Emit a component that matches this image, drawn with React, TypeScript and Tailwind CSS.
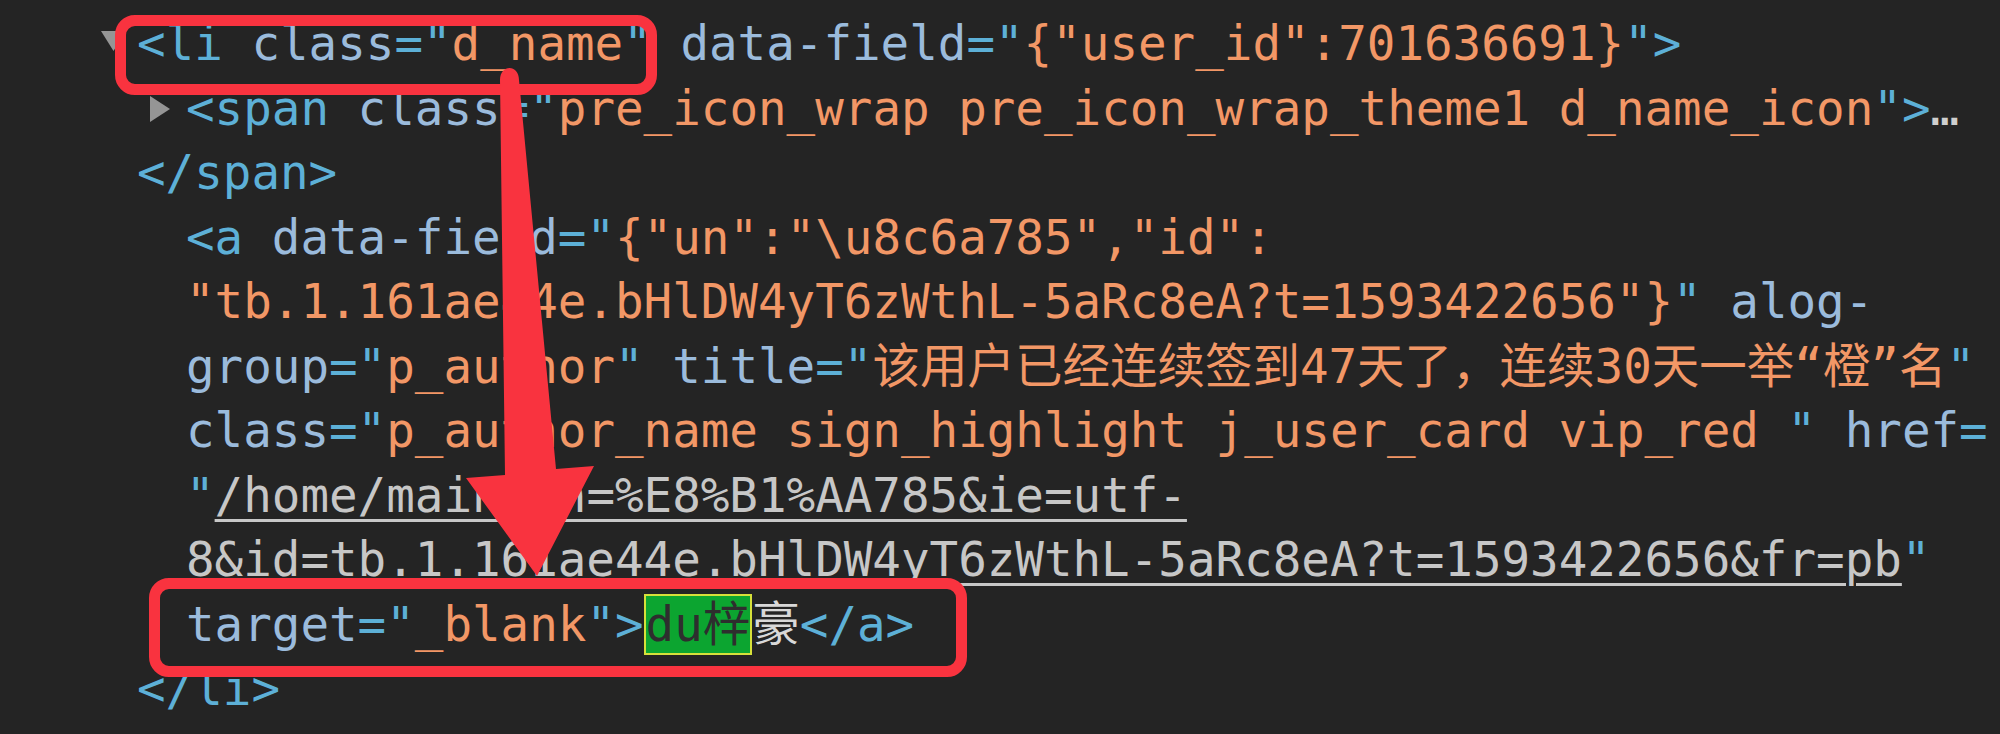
import React from "react";

const T = ({ children }: { children: React.ReactNode }) => (
  <span className="text-[#5db0d7]">{children}</span>
);
const N = ({ children }: { children: React.ReactNode }) => (
  <span className="text-[#9bbbdc]">{children}</span>
);
const V = ({ children }: { children: React.ReactNode }) => (
  <span className="text-[#f29766]">{children}</span>
);
const L = ({ children }: { children: React.ReactNode }) => (
  <span className="text-[#c7c7c7] underline decoration-[3px] underline-offset-[7px]">{children}</span>
);

const Line = ({ pad, children }: { pad: string; children: React.ReactNode }) => (
  <div className={`flex h-[64.5px] items-center whitespace-pre leading-[64.5px] ${pad}`}>
    {children}
  </div>
);

export default function App() {
  return (
    <div
      className="relative h-[734px] w-[2000px] overflow-hidden bg-[#242424] pt-[12px] text-[47.5px]"
      style={{ fontFamily: '"DejaVu Sans Mono", "Noto Sans CJK SC", monospace' }}
    >
      <Line pad="pl-[100px]">
        <svg width="27" height="22" viewBox="0 0 27 22" className="mr-[10px] -mt-[6px] shrink-0">
          <path d="M1 1 L26 1 L13.5 21 Z" fill="#959595" />
        </svg>
        <span>
          <T>&lt;li</T> <N>class</N>
          <T>="</T>
          <V>d_name</V>
          <T>"</T> <N>data-field</N>
          <T>="</T>
          <V>{'{"user_id":701636691}'}</V>
          <T>"&gt;</T>
        </span>
      </Line>
      <Line pad="pl-[149px]">
        <svg width="22" height="28" viewBox="0 0 22 28" className="mr-[15px] shrink-0">
          <path d="M1 1 L21 14 L1 27 Z" fill="#959595" />
        </svg>
        <span>
          <T>&lt;span</T> <N>class</N>
          <T>="</T>
          <V>pre_icon_wrap pre_icon_wrap_theme1 d_name_icon</V>
          <T>"&gt;</T>
          <span className="text-[#cfcfcf]">…</span>
        </span>
      </Line>
      <Line pad="pl-[137px]">
        <T>&lt;/span&gt;</T>
      </Line>
      <Line pad="pl-[186px]">
        <span>
          <T>&lt;a</T> <N>data-field</N>
          <T>="</T>
          <V>{'{"un":"\\u8c6a785","id":'}</V>
        </span>
      </Line>
      <Line pad="pl-[186px]">
        <span>
          <V>{'"tb.1.161ae44e.bHlDW4yT6zWthL-5aRc8eA?t=1593422656"}'}</V>
          <T>"</T> <N>alog-</N>
        </span>
      </Line>
      <Line pad="pl-[186px]">
        <span>
          <N>group</N>
          <T>="</T>
          <V>p_author</V>
          <T>"</T> <N>title</N>
          <T>="</T>
          <V>该用户已经连续签到47天了，连续30天一举“橙”名</V>
          <T>"</T>
        </span>
      </Line>
      <Line pad="pl-[186px]">
        <span>
          <N>class</N>
          <T>="</T>
          <V>p_author_name sign_highlight j_user_card vip_red </V>
          <T>"</T> <N>href</N>
          <T>=</T>
        </span>
      </Line>
      <Line pad="pl-[186px]">
        <span>
          <T>"</T>
          <L>/home/main?un=%E8%B1%AA785&amp;ie=utf-</L>
        </span>
      </Line>
      <Line pad="pl-[186px]">
        <span>
          <L>8&amp;id=tb.1.161ae44e.bHlDW4yT6zWthL-5aRc8eA?t=1593422656&amp;fr=pb</L>
          <T>"</T>
        </span>
      </Line>
      <Line pad="pl-[186px]">
        <span>
          <N>target</N>
          <T>="</T>
          <V>_blank</V>
          <T>"&gt;</T>
          <span className="inline-block border-2 border-[#d6e03a] bg-[#0ca530] leading-[57px] text-[#2e2e2e]">
            du梓
          </span>
          <span className="text-[#d8d8d8]">豪</span>
          <T>&lt;/a&gt;</T>
        </span>
      </Line>
      <Line pad="pl-[137px]">
        <T>&lt;/li&gt;</T>
      </Line>

      {/* annotation overlays */}
      <div className="absolute left-[115px] top-[15px] h-[80px] w-[542px] rounded-[20px] border-[11px] border-[#f9333f]" />
      <div className="absolute left-[149px] top-[578px] h-[99px] w-[818px] rounded-[20px] border-[11px] border-[#f9333f]" />
      <svg
        className="absolute left-0 top-0"
        width="2000"
        height="734"
        viewBox="0 0 2000 734"
      >
        <path
          d="M500 80 C500 64 519 64 519 80 L556 469 L594 466 L537 576 L466 478 L505 475 Z"
          fill="#f9333f"
        />
      </svg>
    </div>
  );
}
